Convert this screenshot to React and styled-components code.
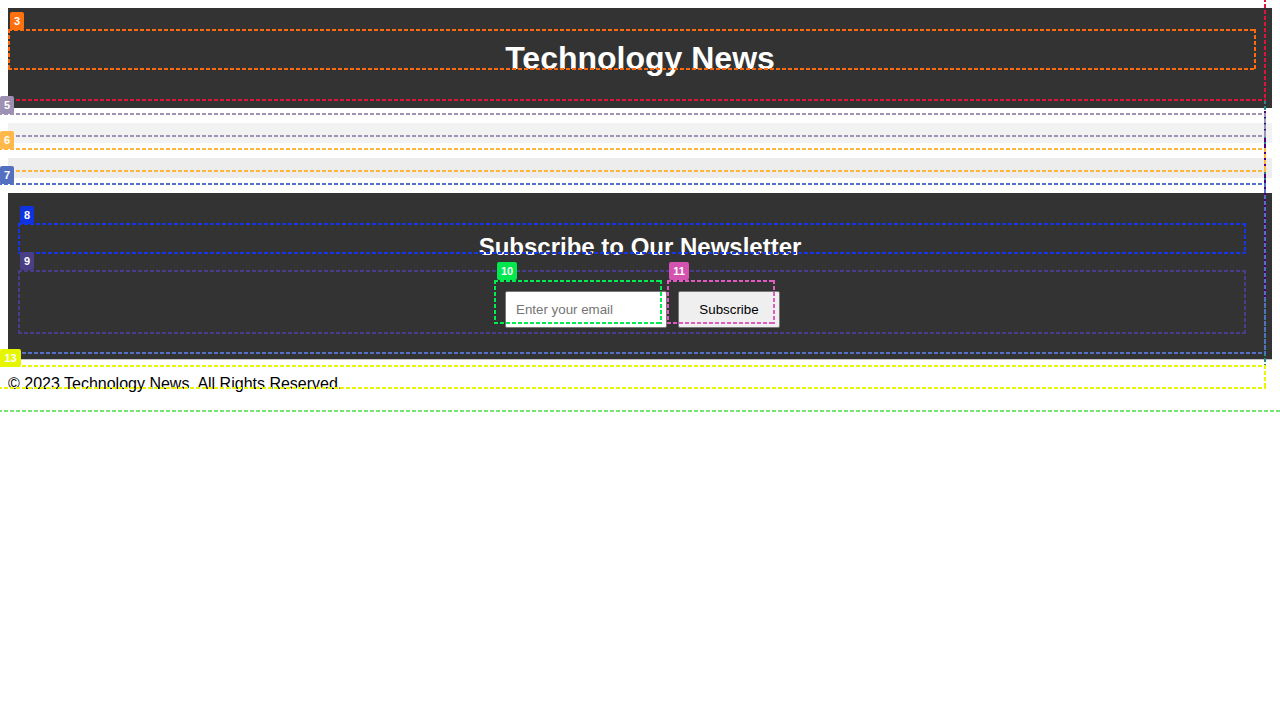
import React from 'react';
import styled, { createGlobalStyle } from 'styled-components';

const GlobalStyle = createGlobalStyle`
  html, body {
    background: #ffffff;
  }
  body {
    margin: 8px;
    font-family: "Liberation Sans", Arial, sans-serif;
    color: #000;
  }
`;

// debug outlines that sit over the page (screenshot coordinates)
const outlines = [
  { c: '#74e474', x: -2, y: -2, w: 1290, h: 414 },
  { c: '#2e8787', x: -2, y: -2, w: 1268, h: 369 },
  { c: '#dc143c', x: -2, y: -2, w: 1268, h: 103 },
  { c: '#a092b6', x: -2, y: 113, w: 1268, h: 24 },
  { c: '#ffb43c', x: -2, y: 148, w: 1268, h: 24 },
  { c: '#5470c6', x: -2, y: 183, w: 1268, h: 171 },
  { c: '#ff6a10', x: 8, y: 29, w: 1248, h: 41 },
  { c: '#1636e6', x: 18, y: 223, w: 1228, h: 31 },
  { c: '#483d8b', x: 18, y: 270, w: 1228, h: 64 },
  { c: '#00ec50', x: 494, y: 280, w: 168, h: 44 },
  { c: '#e05cc0', x: 667, y: 280, w: 108, h: 44 },
  { c: '#e8f600', x: -2, y: 365, w: 1268, h: 24 },
];

// edges whose horizontal sides are hidden under other outlines
const edges = [
  { c: '#4b0082', x: 1264, y: 111, h: 190 },
];

const tags = [
  { n: '3', c: '#ff700f', x: 10, y: 12, w: 14 },
  { n: '5', c: '#9e90b2', x: 0, y: 96, w: 14 },
  { n: '6', c: '#ffb84a', x: 0, y: 131, w: 14 },
  { n: '7', c: '#546fbf', x: 0, y: 166, w: 14 },
  { n: '8', c: '#0f33e0', x: 20, y: 206, w: 14 },
  { n: '9', c: '#4a3f86', x: 20, y: 252, w: 14 },
  { n: '10', c: '#00e84e', x: 497, y: 262, w: 20 },
  { n: '11', c: '#d452b0', x: 669, y: 262, w: 20 },
  { n: '13', c: '#e6f600', x: 0, y: 349, w: 21 },
];

const Page = styled.div`
  font-size: 16px;
`;

const Header = styled.header`
  background: #333333;
  color: #ffffff;
  padding: 30px 8px;
  text-align: center;
`;

const Title = styled.h1`
  margin: 0;
  font-size: 32px;
  line-height: 40px;
  font-weight: bold;
`;

const Main = styled.main`
  display: block;
`;

const Article = styled.section`
  margin: 15px 0;
  padding: 10px;
  background: ${p => p.$tone};
`;

const Newsletter = styled.section`
  background: #333333;
  color: #ffffff;
  padding: 20px 10px;
  text-align: center;
  border-bottom: 1px solid #c4c4c4;
`;

const NewsTitle = styled.h2`
  margin: 19px 0;
  font-size: 24px;
  line-height: 29px;
  font-weight: bold;
`;

const Form = styled.form`
  display: flex;
  justify-content: center;
  gap: 11px;
  padding: 11px 0 11px 5px;
`;

const EmailInput = styled.input`
  box-sizing: border-box;
  width: 162px;
  height: 37px;
  padding: 10px;
  border: 1px solid #767676;
  border-radius: 2px;
  background: #ffffff;
  font-family: "Liberation Sans", Arial, sans-serif;
  font-size: 13.33px;
  color: #000;
  &::placeholder {
    color: #757575;
  }
`;

const SubscribeButton = styled.button`
  box-sizing: border-box;
  width: 102px;
  height: 37px;
  padding: 10px 20px;
  border: 1px solid #767676;
  border-radius: 2px;
  background: #efefef;
  color: #000;
  font-family: "Liberation Sans", Arial, sans-serif;
  font-size: 13.33px;
`;

const Footer = styled.footer`
  padding-top: 15px;
  font-size: 16px;
  line-height: 18px;
`;

const Overlay = styled.div`
  position: absolute;
  top: 0;
  left: 0;
  width: 1280px;
  height: 720px;
  overflow: hidden;
  pointer-events: none;
`;

const dash = (deg, c) =>
  `repeating-linear-gradient(${deg}deg, ${c} 0 4px, transparent 4px 6px)`;

const Outline = styled.div`
  position: absolute;
  left: ${p => p.$x}px;
  top: ${p => p.$y}px;
  width: ${p => p.$w}px;
  height: ${p => p.$h}px;
  background:
    ${p => dash(90, p.$c)} left top / 100% 2px no-repeat,
    ${p => dash(90, p.$c)} left bottom / 100% 2px no-repeat,
    ${p => dash(180, p.$c)} left top / 2px 100% no-repeat,
    ${p => dash(180, p.$c)} right top / 2px 100% no-repeat;
`;

const Edge = styled.div`
  position: absolute;
  left: ${p => p.$x}px;
  top: ${p => p.$y}px;
  width: 2px;
  height: ${p => p.$h}px;
  background: ${p => dash(180, p.$c)} 0 3px / 2px 100% repeat-y;
`;

const Tag = styled.span`
  position: absolute;
  left: ${p => p.$x}px;
  top: ${p => p.$y}px;
  width: ${p => p.$w}px;
  height: 18px;
  border-radius: 2px;
  background: ${p => p.$c};
  color: #ffffff;
  font-family: "Liberation Sans", Arial, sans-serif;
  font-size: 11px;
  font-weight: bold;
  line-height: 18px;
  text-align: center;
`;

export default function App() {
  return (
    <Page>
      <GlobalStyle />
      <Header>
        <Title>Technology News</Title>
      </Header>
      <Main>
        <Article $tone="#f2f2f2" />
        <Article $tone="#ededed" />
        <Newsletter>
          <NewsTitle>Subscribe to Our Newsletter</NewsTitle>
          <Form onSubmit={e => e.preventDefault()}>
            <EmailInput type="email" placeholder="Enter your email" />
            <SubscribeButton type="submit">Subscribe</SubscribeButton>
          </Form>
        </Newsletter>
      </Main>
      <Footer>© 2023 Technology News. All Rights Reserved.</Footer>

      <Overlay>
        {outlines.slice(0, 2).map((o, i) => (
          <Outline key={i} $c={o.c} $x={o.x} $y={o.y} $w={o.w} $h={o.h} />
        ))}
        {edges.map((e, i) => (
          <Edge key={i} $c={e.c} $x={e.x} $y={e.y} $h={e.h} />
        ))}
        {outlines.slice(2).map((o, i) => (
          <Outline key={i} $c={o.c} $x={o.x} $y={o.y} $w={o.w} $h={o.h} />
        ))}
        {tags.map(t => (
          <Tag key={t.n} $c={t.c} $x={t.x} $y={t.y} $w={t.w}>{t.n}</Tag>
        ))}
      </Overlay>
    </Page>
  );
}
